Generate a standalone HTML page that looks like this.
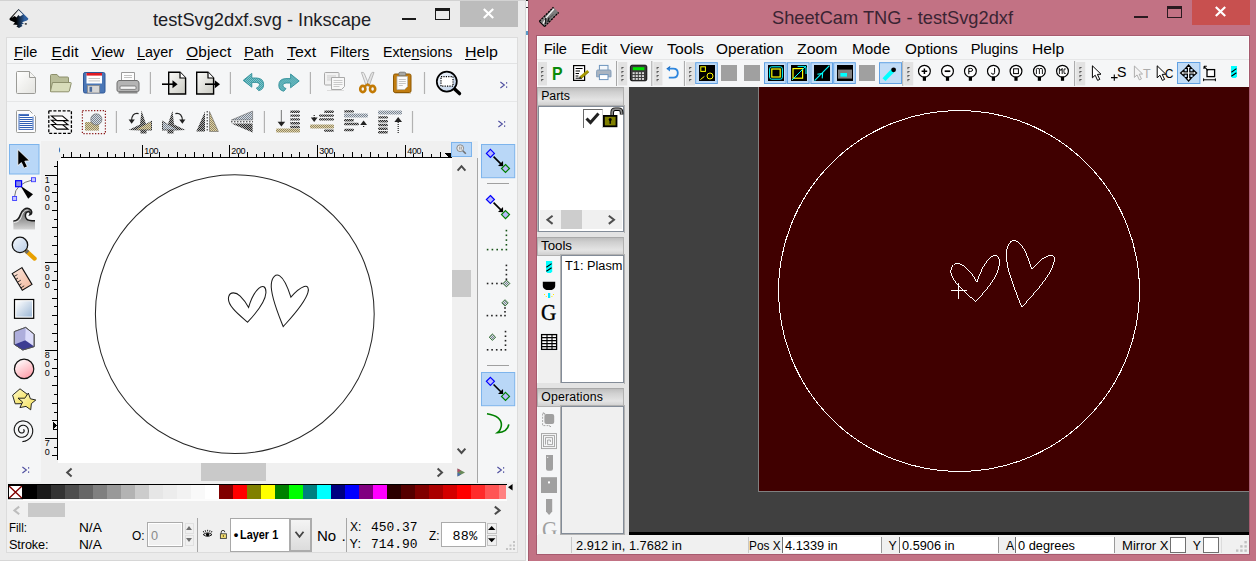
<!DOCTYPE html><html><head><meta charset="utf-8"><title>testSvg2dxf</title><style>
*{box-sizing:border-box}
html,body{margin:0;padding:0}
body{width:1256px;height:561px;position:relative;overflow:hidden;background:#ebebeb;font-family:"Liberation Sans",sans-serif;color:#000}
.a{position:absolute}
.t{position:absolute;white-space:nowrap;line-height:1}
svg{position:absolute;overflow:visible}
u{text-decoration:underline;text-underline-offset:1.5px;text-decoration-thickness:1px}
</style></head><body>
<div class="a" style="left:0px;top:0px;width:528px;height:561px;background:#ebebeb;"></div>
<div class="a" style="left:0px;top:0px;width:526px;height:1px;background:#d2d2d2;"></div>
<div class="a" style="left:0px;top:560px;width:526px;height:1px;background:#d6d6d6;"></div>
<div class="a" style="left:525px;top:0px;width:1px;height:561px;background:#d6d6d6;"></div>
<div class="a" style="left:526px;top:0px;width:2px;height:561px;background:#f8f9f9;"></div>
<div class="a" style="left:526px;top:0px;width:2px;height:1px;background:#222;"></div>
<div class="a" style="left:526px;top:7px;width:2px;height:1px;background:#222;"></div>
<div class="a" style="left:526px;top:31px;width:2px;height:4px;background:#5a9ac8;"></div>
<div class="t" style="left:152.5px;top:10.00px;font-size:19px;color:#1c1c24;transform:scaleX(0.9606);transform-origin:0 0;">testSvg2dxf.svg - Inkscape</div>
<div class="a" style="left:402px;top:17.5px;width:14px;height:2.5px;background:#1a1a1a;"></div>
<div class="a" style="left:435px;top:8px;width:15px;height:12px;background:transparent;border:1px solid #1a1a1a;border-top:3px solid #1a1a1a"></div>
<div class="a" style="left:460px;top:1px;width:58px;height:25.6px;background:#bcbcbc;"></div>
<svg style="left:483px;top:9px" width="11" height="9" viewBox="0 0 11 9" ><path d="M0.8 0 L10.2 9 M10.2 0 L0.8 9" stroke="#fff" stroke-width="2.2" fill="none"/></svg>
<div class="a" style="left:6px;top:37px;width:512px;height:516px;background:#dcdcdc;"></div>
<div class="a" style="left:7px;top:38px;width:510px;height:514px;background:#f0f0f0;"></div>
<div class="a" style="left:7px;top:38px;width:510px;height:103px;background:#f5f6f7;"></div>
<div class="a" style="left:7px;top:63px;width:510px;height:1px;background:#e2e3e4;"></div>
<div class="a" style="left:7px;top:101px;width:510px;height:1px;background:#e6e7e8;"></div>
<div class="t" style="left:14.45px;top:44.00px;font-size:15.4px;color:#000;transform:scaleX(0.9450);transform-origin:0 0;"><u>F</u>ile</div>
<div class="t" style="left:51.45px;top:44.00px;font-size:15.4px;color:#000;letter-spacing:0.221px;"><u>E</u>dit</div>
<div class="t" style="left:91.45px;top:44.00px;font-size:15.4px;color:#000;letter-spacing:-0.051px;"><u>V</u>iew</div>
<div class="t" style="left:137.45px;top:44.00px;font-size:15.4px;color:#000;transform:scaleX(0.9333);transform-origin:0 0;"><u>L</u>ayer</div>
<div class="t" style="left:186.2px;top:44.00px;font-size:15.4px;color:#000;letter-spacing:0.139px;"><u>O</u>bject</div>
<div class="t" style="left:244.45px;top:44.00px;font-size:15.4px;color:#000;transform:scaleX(0.9454);transform-origin:0 0;"><u>P</u>ath</div>
<div class="t" style="left:287.2px;top:44.00px;font-size:15.4px;color:#000;transform:scaleX(1.0339);transform-origin:0 0;"><u>T</u>ext</div>
<div class="t" style="left:330.2px;top:44.00px;font-size:15.4px;color:#000;transform:scaleX(0.9351);transform-origin:0 0;">Filter<u>s</u></div>
<div class="t" style="left:382.95px;top:44.00px;font-size:15.4px;color:#000;transform:scaleX(0.9220);transform-origin:0 0;">Exte<u>n</u>sions</div>
<div class="t" style="left:465.45px;top:44.00px;font-size:15.4px;color:#000;transform:scaleX(1.0404);transform-origin:0 0;"><u>H</u>elp</div>
<div class="a" style="left:7px;top:141px;width:34px;height:341.4px;background:#f5f6f7;"></div>
<div class="a" style="left:478px;top:141px;width:39px;height:341.4px;background:#f5f6f7;"></div>
<div class="a" style="left:477px;top:142px;width:1px;height:341px;background:#a6a6a6;"></div>
<div class="t" style="left:9.0px;top:522.00px;font-size:12.7px;color:#000;transform:scaleX(0.9063);transform-origin:0 0;">Fill:</div>
<div class="t" style="left:9.0px;top:539.00px;font-size:12.7px;color:#000;letter-spacing:-0.105px;">Stroke:</div>
<div class="t" style="left:79.2px;top:522.00px;font-size:12.7px;color:#000;transform:scaleX(1.0770);transform-origin:0 0;">N/A</div>
<div class="t" style="left:79.2px;top:539.00px;font-size:12.7px;color:#000;transform:scaleX(1.0770);transform-origin:0 0;">N/A</div>
<div class="t" style="left:132.3px;top:530.00px;font-size:12.7px;color:#000;transform:scaleX(0.9399);transform-origin:0 0;">O:</div>
<div class="a" style="left:147px;top:522px;width:36.3px;height:24.6px;background:#f0f0f0;border:1px solid #ababab;box-shadow:inset 0 0 0 1px #fff"></div>
<div class="t" style="left:151px;top:530.00px;font-size:12.7px;color:#8a8a8a;">0</div>
<div class="a" style="left:184.5px;top:523px;width:9px;height:11px;background:#f0f0f0;border:1px solid #e0e0e0"></div>
<div class="a" style="left:184.5px;top:535px;width:9px;height:11px;background:#f0f0f0;border:1px solid #e0e0e0"></div>
<svg style="left:186px;top:526px" width="6" height="16" viewBox="0 0 6 16" ><path d="M0 4 L3 0 L6 4Z M0 12 L3 16 L6 12Z" fill="#6e6e6e"/></svg>
<div class="a" style="left:197.3px;top:518px;width:1px;height:34px;background:#a6a6a6;"></div>
<div class="a" style="left:230px;top:518px;width:82px;height:34px;background:#fff;border:1px solid #a8a8a8"></div>
<div class="a" style="left:289px;top:518px;width:23px;height:34px;background:linear-gradient(#f4f4f4,#dcdcdc);border:2px solid #acacac"></div>
<svg style="left:295px;top:531px" width="9" height="7" viewBox="0 0 9 7" ><path d="M0.5 0.8 L4.5 5.8 L8.5 0.8" stroke="#444" stroke-width="1.8" fill="none"/></svg>
<div class="t" style="left:233.8px;top:528.00px;font-size:13px;color:#000;font-weight:bold;">•</div>
<div class="t" style="left:240.2px;top:528.00px;font-size:13px;color:#000;transform:scaleX(0.8390);transform-origin:0 0;font-weight:bold;">Layer 1</div>
<div class="t" style="left:317px;top:528.00px;font-size:15.5px;color:#000;transform:scaleX(0.9690);transform-origin:0 0;">No</div>
<div class="t" style="left:341.5px;top:528.00px;font-size:15.5px;color:#000;">.</div>
<div class="a" style="left:345px;top:518px;width:1.5px;height:34px;background:#f0f0f0;"></div>
<div class="a" style="left:346.3px;top:518px;width:1px;height:34px;background:#a6a6a6;"></div>
<div class="t" style="left:349.6px;top:521.00px;font-size:12.7px;color:#000;transform:scaleX(0.9501);transform-origin:0 0;">X:</div>
<div class="t" style="left:349.6px;top:538.00px;font-size:12.7px;color:#000;letter-spacing:0.102px;">Y:</div>
<div class="t" style="left:371.4px;top:521.00px;font-size:13.4px;color:#000;transform:scaleX(0.9659);transform-origin:0 0;font-family:'Liberation Mono',monospace;">450.37</div>
<div class="t" style="left:371.4px;top:538.00px;font-size:13.4px;color:#000;transform:scaleX(0.9659);transform-origin:0 0;font-family:'Liberation Mono',monospace;">714.90</div>
<div class="t" style="left:428.8px;top:530.00px;font-size:12.7px;color:#000;transform:scaleX(0.9215);transform-origin:0 0;">Z:</div>
<div class="a" style="left:441.3px;top:522.3px;width:45.2px;height:24.4px;background:#fff;border:1px solid #ababab"></div>
<div class="t" style="left:452.6px;top:530.00px;font-size:13.4px;color:#000;letter-spacing:0.239px;font-family:'Liberation Mono',monospace;">88%</div>
<div class="a" style="left:487.3px;top:523.3px;width:9.6px;height:11px;background:#f0f0f0;border:1px solid #c4c4c4"></div>
<div class="a" style="left:487.3px;top:534.6px;width:9.6px;height:11px;background:#f0f0f0;border:1px solid #c4c4c4"></div>
<svg style="left:488.3px;top:526px" width="7.4" height="16.3" viewBox="0 0 7.4 16.3" ><path d="M0 4 L3.7 0 L7.4 4Z M0 12.3 L3.7 16.3 L7.4 12.3Z" fill="#000"/></svg>
<svg style="left:506px;top:541px" width="9" height="9" viewBox="0 0 9 9" ><g fill="#c4c4c4"><rect x="7" y="0" width="2" height="2"/><rect x="7" y="3.5" width="2" height="2"/><rect x="3.5" y="3.5" width="2" height="2"/><rect x="7" y="7" width="2" height="2"/><rect x="3.5" y="7" width="2" height="2"/><rect x="0" y="7" width="2" height="2"/></g></svg>
<div class="a" style="left:58px;top:158px;width:394px;height:305px;background:#fff;"></div>
<svg style="left:57px;top:157px" width="6" height="6" viewBox="0 0 6 6" ><path d="M1 1 H4.2 L1 4.2Z" fill="#f0f0f0"/></svg>
<div class="a" style="left:41px;top:141px;width:437px;height:17px;background:#f0f0f0;"></div>
<div class="a" style="left:41px;top:141px;width:17px;height:340px;background:#f0f0f0;"></div>
<svg style="left:0px;top:0px" width="528" height="561" viewBox="0 0 528 561" shape-rendering="crispEdges"><rect x="61" y="157" width="390" height="1" fill="#000"/><rect x="63" y="154" width="1" height="3" fill="#000"/><rect x="71" y="152" width="1" height="5" fill="#000"/><rect x="80" y="154" width="1" height="3" fill="#000"/><rect x="89" y="152" width="1" height="5" fill="#000"/><rect x="98" y="154" width="1" height="3" fill="#000"/><rect x="107" y="152" width="1" height="5" fill="#000"/><rect x="115" y="154" width="1" height="3" fill="#000"/><rect x="124" y="152" width="1" height="5" fill="#000"/><rect x="133" y="154" width="1" height="3" fill="#000"/><rect x="142" y="145" width="1" height="12" fill="#000"/><rect x="150" y="154" width="1" height="3" fill="#000"/><rect x="159" y="152" width="1" height="5" fill="#000"/><rect x="168" y="154" width="1" height="3" fill="#000"/><rect x="177" y="152" width="1" height="5" fill="#000"/><rect x="185" y="154" width="1" height="3" fill="#000"/><rect x="194" y="152" width="1" height="5" fill="#000"/><rect x="203" y="154" width="1" height="3" fill="#000"/><rect x="212" y="152" width="1" height="5" fill="#000"/><rect x="220" y="154" width="1" height="3" fill="#000"/><rect x="229" y="145" width="1" height="12" fill="#000"/><rect x="238" y="154" width="1" height="3" fill="#000"/><rect x="247" y="152" width="1" height="5" fill="#000"/><rect x="256" y="154" width="1" height="3" fill="#000"/><rect x="264" y="152" width="1" height="5" fill="#000"/><rect x="273" y="154" width="1" height="3" fill="#000"/><rect x="282" y="152" width="1" height="5" fill="#000"/><rect x="291" y="154" width="1" height="3" fill="#000"/><rect x="299" y="152" width="1" height="5" fill="#000"/><rect x="308" y="154" width="1" height="3" fill="#000"/><rect x="317" y="145" width="1" height="12" fill="#000"/><rect x="326" y="154" width="1" height="3" fill="#000"/><rect x="334" y="152" width="1" height="5" fill="#000"/><rect x="343" y="154" width="1" height="3" fill="#000"/><rect x="352" y="152" width="1" height="5" fill="#000"/><rect x="361" y="154" width="1" height="3" fill="#000"/><rect x="370" y="152" width="1" height="5" fill="#000"/><rect x="378" y="154" width="1" height="3" fill="#000"/><rect x="387" y="152" width="1" height="5" fill="#000"/><rect x="396" y="154" width="1" height="3" fill="#000"/><rect x="405" y="145" width="1" height="12" fill="#000"/><rect x="413" y="154" width="1" height="3" fill="#000"/><rect x="422" y="152" width="1" height="5" fill="#000"/><rect x="431" y="154" width="1" height="3" fill="#000"/><rect x="440" y="152" width="1" height="5" fill="#000"/><rect x="57" y="161" width="1" height="299" fill="#000"/><rect x="54" y="166" width="3" height="1" fill="#000"/><rect x="45" y="175" width="12" height="1" fill="#000"/><rect x="54" y="184" width="3" height="1" fill="#000"/><rect x="52" y="192" width="5" height="1" fill="#000"/><rect x="54" y="201" width="3" height="1" fill="#000"/><rect x="52" y="210" width="5" height="1" fill="#000"/><rect x="54" y="219" width="3" height="1" fill="#000"/><rect x="52" y="227" width="5" height="1" fill="#000"/><rect x="54" y="236" width="3" height="1" fill="#000"/><rect x="52" y="245" width="5" height="1" fill="#000"/><rect x="54" y="254" width="3" height="1" fill="#000"/><rect x="45" y="262" width="12" height="1" fill="#000"/><rect x="54" y="271" width="3" height="1" fill="#000"/><rect x="52" y="280" width="5" height="1" fill="#000"/><rect x="54" y="289" width="3" height="1" fill="#000"/><rect x="52" y="298" width="5" height="1" fill="#000"/><rect x="54" y="306" width="3" height="1" fill="#000"/><rect x="52" y="315" width="5" height="1" fill="#000"/><rect x="54" y="324" width="3" height="1" fill="#000"/><rect x="52" y="333" width="5" height="1" fill="#000"/><rect x="54" y="341" width="3" height="1" fill="#000"/><rect x="45" y="350" width="12" height="1" fill="#000"/><rect x="54" y="359" width="3" height="1" fill="#000"/><rect x="52" y="368" width="5" height="1" fill="#000"/><rect x="54" y="376" width="3" height="1" fill="#000"/><rect x="52" y="385" width="5" height="1" fill="#000"/><rect x="54" y="394" width="3" height="1" fill="#000"/><rect x="52" y="403" width="5" height="1" fill="#000"/><rect x="54" y="412" width="3" height="1" fill="#000"/><rect x="52" y="420" width="5" height="1" fill="#000"/><rect x="54" y="429" width="3" height="1" fill="#000"/><rect x="45" y="438" width="12" height="1" fill="#000"/><rect x="54" y="447" width="3" height="1" fill="#000"/><rect x="52" y="455" width="5" height="1" fill="#000"/><path d="M445 153 L451.5 153 L451.5 157.5 L449 157.5 Z" fill="#000"/><path d="M53 421.5 L57 425.5 L53 429.5 Z" fill="#000"/><rect x="53" y="421.5" width="1.2" height="8" fill="#000"/></svg>
<div class="t" style="left:144.2px;top:147.00px;font-size:9px;color:#000;letter-spacing:-0.3px;">100</div>
<div class="t" style="left:231.2px;top:147.00px;font-size:9px;color:#000;letter-spacing:-0.3px;">200</div>
<div class="t" style="left:319.2px;top:147.00px;font-size:9px;color:#000;letter-spacing:-0.3px;">300</div>
<div class="t" style="left:407.2px;top:147.00px;font-size:9px;color:#000;letter-spacing:-0.3px;">400</div>
<div class="a" style="left:58.5px;top:141px;width:3px;height:16px;overflow:hidden"><div class="t" style="left:-3.4px;top:5.1px;font-size:9px;color:#000">0</div></div>
<div class="t" style="left:44.7px;top:176.00px;font-size:9px;color:#000;">1</div>
<div class="t" style="left:44.7px;top:185.00px;font-size:9px;color:#000;">0</div>
<div class="t" style="left:44.7px;top:194.00px;font-size:9px;color:#000;">0</div>
<div class="t" style="left:44.7px;top:203.00px;font-size:9px;color:#000;">0</div>
<div class="t" style="left:44.7px;top:264.00px;font-size:9px;color:#000;">9</div>
<div class="t" style="left:44.7px;top:273.00px;font-size:9px;color:#000;">0</div>
<div class="t" style="left:44.7px;top:281.00px;font-size:9px;color:#000;">0</div>
<div class="t" style="left:44.7px;top:351.00px;font-size:9px;color:#000;">8</div>
<div class="t" style="left:44.7px;top:360.00px;font-size:9px;color:#000;">0</div>
<div class="t" style="left:44.7px;top:369.00px;font-size:9px;color:#000;">0</div>
<div class="t" style="left:44.7px;top:439.00px;font-size:9px;color:#000;">7</div>
<div class="t" style="left:44.7px;top:448.00px;font-size:9px;color:#000;">0</div>
<div class="a" style="left:41px;top:460px;width:17px;height:3px;background:#f0f0f0;"></div>
<div class="a" style="left:452px;top:158px;width:19.5px;height:305px;background:#f0f0f0;"></div>
<div class="a" style="left:452px;top:270px;width:19px;height:27px;background:#c9c9c9;"></div>
<div class="a" style="left:58px;top:463px;width:394px;height:18.5px;background:#f0f0f0;"></div>
<div class="a" style="left:201px;top:463.2px;width:64.8px;height:18.3px;background:#c9c9c9;"></div>
<div class="a" style="left:452px;top:463px;width:25px;height:18.5px;background:#f0f0f0;"></div>
<div class="a" style="left:451px;top:142px;width:21px;height:15px;background:#b9d7f7;border:1px solid #7db4ec"></div>
<svg style="left:456px;top:144px" width="11" height="11" viewBox="0 0 11 11" ><circle cx="4.2" cy="4.2" r="3.4" fill="#e8e8e8" stroke="#8a8a8a" stroke-width="1"/><path d="M6.8 6.8 L9.8 9.8" stroke="#707070" stroke-width="1.6"/><rect x="3.2" y="2.6" width="1" height="3" fill="#999"/><rect x="4.8" y="2.6" width="1" height="3" fill="#999"/></svg>
<svg style="left:457px;top:164.5px" width="9" height="6.2" viewBox="0 0 9 6.2" ><path d="M0.6 5.6 L4.5 1.2 L8.4 5.6" stroke="#4b4b4b" stroke-width="2" fill="none"/></svg>
<svg style="left:457px;top:448.4px" width="9" height="6.2" viewBox="0 0 9 6.2" ><path d="M0.6 0.6 L4.5 5 L8.4 0.6" stroke="#4b4b4b" stroke-width="2" fill="none"/></svg>
<svg style="left:65.5px;top:467.5px" width="6.2" height="9" viewBox="0 0 6.2 9" ><path d="M5.6 0.6 L1.2 4.5 L5.6 8.4" stroke="#4b4b4b" stroke-width="2" fill="none"/></svg>
<svg style="left:437px;top:467.5px" width="6.2" height="9" viewBox="0 0 6.2 9" ><path d="M0.6 0.6 L5 4.5 L0.6 8.4" stroke="#4b4b4b" stroke-width="2" fill="none"/></svg>
<svg style="left:0px;top:0px" width="528" height="561" viewBox="0 0 528 561" ><circle cx="234.8" cy="314.1" r="139.4" fill="none" stroke="#262626" stroke-width="1.02"/><g transform="translate(234.7 314.1)" fill="none" stroke="#1c1c1c" stroke-width="1.05"><path d="M12.9 8.1 C6.5 2.5 -8.5 -8.5 -6.0 -17.5 C-4.6 -22.6 1.2 -22.2 5.5 -18.0 C8.9 -14.7 11.6 -10.9 13.9 -6.7 C15.6 -12.6 19.3 -21.4 24.0 -25.7 C27.8 -29.2 31.6 -28.0 31.2 -21.1 C30.6 -11.5 20.5 0.0 12.9 8.1 Z"/><path d="M48.5 12.5 C44.0 1.0 35.5 -18.5 36.6 -30.0 C37.3 -37.3 41.2 -40.6 45.0 -38.2 C50.5 -34.7 53.8 -24.5 56.2 -16.9 C59.8 -21.0 65.0 -26.0 69.5 -27.5 C73.0 -28.6 74.5 -26.0 73.2 -21.5 C70.0 -10.5 57.0 3.0 48.5 12.5 Z"/></g></svg>
<div class="a" style="left:8px;top:484px;width:499px;height:1px;background:#000;"></div>
<div class="a" style="left:8px;top:499px;width:499px;height:2.4px;background:#fcfcfc;"></div>
<div class="a" style="left:23px;top:485px;width:14px;height:14.2px;background:#000000;"></div>
<div class="a" style="left:37px;top:485px;width:14px;height:14.2px;background:#1a1a1a;"></div>
<div class="a" style="left:51px;top:485px;width:14px;height:14.2px;background:#333333;"></div>
<div class="a" style="left:65px;top:485px;width:14px;height:14.2px;background:#4d4d4d;"></div>
<div class="a" style="left:79px;top:485px;width:14px;height:14.2px;background:#666666;"></div>
<div class="a" style="left:93px;top:485px;width:14px;height:14.2px;background:#808080;"></div>
<div class="a" style="left:107px;top:485px;width:14px;height:14.2px;background:#999999;"></div>
<div class="a" style="left:121px;top:485px;width:14px;height:14.2px;background:#b3b3b3;"></div>
<div class="a" style="left:135px;top:485px;width:14px;height:14.2px;background:#cccccc;"></div>
<div class="a" style="left:149px;top:485px;width:14px;height:14.2px;background:#e6e6e6;"></div>
<div class="a" style="left:163px;top:485px;width:14px;height:14.2px;background:#ececec;"></div>
<div class="a" style="left:177px;top:485px;width:14px;height:14.2px;background:#f2f2f2;"></div>
<div class="a" style="left:191px;top:485px;width:14px;height:14.2px;background:#f9f9f9;"></div>
<div class="a" style="left:205px;top:485px;width:14px;height:14.2px;background:#ffffff;"></div>
<div class="a" style="left:219px;top:485px;width:14px;height:14.2px;background:#800000;"></div>
<div class="a" style="left:233px;top:485px;width:14px;height:14.2px;background:#ff0000;"></div>
<div class="a" style="left:247px;top:485px;width:14px;height:14.2px;background:#808000;"></div>
<div class="a" style="left:261px;top:485px;width:14px;height:14.2px;background:#ffff00;"></div>
<div class="a" style="left:275px;top:485px;width:14px;height:14.2px;background:#008000;"></div>
<div class="a" style="left:289px;top:485px;width:14px;height:14.2px;background:#00ff00;"></div>
<div class="a" style="left:303px;top:485px;width:14px;height:14.2px;background:#008080;"></div>
<div class="a" style="left:317px;top:485px;width:14px;height:14.2px;background:#00ffff;"></div>
<div class="a" style="left:331px;top:485px;width:14px;height:14.2px;background:#000080;"></div>
<div class="a" style="left:345px;top:485px;width:14px;height:14.2px;background:#0000ff;"></div>
<div class="a" style="left:359px;top:485px;width:14px;height:14.2px;background:#800080;"></div>
<div class="a" style="left:373px;top:485px;width:14px;height:14.2px;background:#ff00ff;"></div>
<div class="a" style="left:387px;top:485px;width:14px;height:14.2px;background:#2b0000;"></div>
<div class="a" style="left:401px;top:485px;width:14px;height:14.2px;background:#550000;"></div>
<div class="a" style="left:415px;top:485px;width:14px;height:14.2px;background:#800000;"></div>
<div class="a" style="left:429px;top:485px;width:14px;height:14.2px;background:#aa0000;"></div>
<div class="a" style="left:443px;top:485px;width:14px;height:14.2px;background:#d40000;"></div>
<div class="a" style="left:457px;top:485px;width:14px;height:14.2px;background:#ff0000;"></div>
<div class="a" style="left:471px;top:485px;width:14px;height:14.2px;background:#ff2a2a;"></div>
<div class="a" style="left:485px;top:485px;width:14px;height:14.2px;background:#ff5555;"></div>
<div class="a" style="left:499px;top:485px;width:7.300000000000011px;height:14.2px;background:#ff8080;"></div>
<div class="a" style="left:8px;top:485px;width:15px;height:14.2px;background:#fff;"></div>
<svg style="left:8px;top:485px" width="15" height="14.2" viewBox="0 0 15 14.2" ><path d="M0.5 0.5 L14.5 13.7 M14.5 0.5 L0.5 13.7" stroke="#800000" stroke-width="1.4"/><rect x="0.5" y="0.5" width="14" height="13.2" fill="none" stroke="#000" stroke-width="1"/></svg>
<svg style="left:508.4px;top:484.4px" width="4.6" height="6.4" viewBox="0 0 4.6 6.4" ><path d="M4.6 0 L0 3.2 L4.6 6.4Z" fill="#000"/></svg>
<div class="a" style="left:28.1px;top:503.1px;width:36.7px;height:13.8px;background:#c9c9c9;"></div>
<svg style="left:13px;top:506px" width="7" height="8.8" viewBox="0 0 7 8.8" ><path d="M6.2 0.6 L1.4 4.4 L6.2 8.2" stroke="#bdbdbd" stroke-width="2" fill="none"/></svg>
<svg style="left:494px;top:506px" width="7" height="8.8" viewBox="0 0 7 8.8" ><path d="M0.8 0.6 L5.6 4.4 L0.8 8.2" stroke="#4b4b4b" stroke-width="2" fill="none"/></svg>
<svg style="left:0px;top:0px" width="528" height="561" viewBox="0 0 528 561" ><defs>
<pattern id="st" width="2" height="2" patternUnits="userSpaceOnUse"><rect width="2" height="2" fill="#a9a9a9"/><rect width="1" height="1" fill="#2a2a2a"/><rect x="1" y="1" width="1" height="1" fill="#2a2a2a"/></pattern>
<pattern id="stt" width="2" height="2" patternUnits="userSpaceOnUse"><rect width="2" height="2" fill="#e4d6a4"/><rect width="1" height="1" fill="#8e8468"/><rect x="1" y="1" width="1" height="1" fill="#8e8468"/></pattern>
<pattern id="stb" width="2" height="2" patternUnits="userSpaceOnUse"><rect width="2" height="2" fill="#d4dce6"/><rect width="1" height="1" fill="#7c848c"/><rect x="1" y="1" width="1" height="1" fill="#7c848c"/></pattern>
<pattern id="teal" width="2" height="2" patternUnits="userSpaceOnUse"><rect width="2" height="2" fill="#8fd3d8"/><rect width="1" height="1" fill="#2f8f99"/><rect x="1" y="1" width="1" height="1" fill="#2f8f99"/></pattern>
<linearGradient id="pg" x1="0" y1="0" x2="1" y2="1"><stop offset="0" stop-color="#ffffff"/><stop offset="1" stop-color="#e3e3df"/></linearGradient>
<linearGradient id="dg" x1="0" y1="0" x2="1" y2="1"><stop offset="0" stop-color="#fbfbf9"/><stop offset="1" stop-color="#c9c9c1"/></linearGradient>
<linearGradient id="rg" x1="0" y1="0" x2="1" y2="1"><stop offset="0" stop-color="#ffffff"/><stop offset="1" stop-color="#9db8d6"/></linearGradient>
<linearGradient id="cg" x1="0.2" y1="0" x2="0.8" y2="1"><stop offset="0" stop-color="#ffffff"/><stop offset="1" stop-color="#ff9aa6"/></linearGradient>
<linearGradient id="wg" x1="0" y1="0" x2="0" y2="1"><stop offset="0" stop-color="#5c5c5c"/><stop offset="0.55" stop-color="#9a9a9a"/><stop offset="1" stop-color="#d4d4d4"/></linearGradient>
<linearGradient id="yg" x1="0" y1="0" x2="1" y2="1"><stop offset="0" stop-color="#fffbd0"/><stop offset="1" stop-color="#f2dc4c"/></linearGradient>
<linearGradient id="mg" x1="0" y1="0" x2="1" y2="1"><stop offset="0" stop-color="#fbe6dc"/><stop offset="1" stop-color="#f2b89c"/></linearGradient>
<linearGradient id="lg" x1="0" y1="0" x2="1" y2="1"><stop offset="0" stop-color="#f4f8fd"/><stop offset="1" stop-color="#b9cde6"/></linearGradient>
<linearGradient id="ig" x1="0" y1="0" x2="1" y2="0"><stop offset="0.35" stop-color="#000"/><stop offset="0.8" stop-color="#2d5f9f"/></linearGradient>
</defs><path d="M18.6 9 L28.3 18.6 Q28.6 19.6 27 20.4 L22 22.2 L24 23.4 L21.5 24.6 L22.5 26 L19 28 L16.5 26.4 L17.6 25 L13 24.4 L15 22.6 L10.5 20.6 Q9 19.6 9.6 18.4 Z" fill="url(#ig)"/><path d="M18.6 10 L23 14.5 L20 16.5 L18.4 15 L16.5 17.4 L14.6 16 L11.5 18 Z" fill="#fff" opacity="0.92"/><rect x="24.8" y="23.2" width="2" height="1.4" fill="#222"/><path d="M17.5 71.5 H29.5 L35.5 77.5 V92.5 Q35.5 93.5 34.5 93.5 H17.5 Q16.5 93.5 16.5 92.5 V72.5 Q16.5 71.5 17.5 71.5Z" fill="url(#pg)" stroke="#9b9b97" stroke-width="1"/><path d="M29.5 71.5 V77.5 H35.5" fill="#f4f4f2" stroke="#9b9b97" stroke-width="1"/><path d="M50.5 91.5 V75.5 Q50.5 74.5 51.5 74.5 H57 L59 77 H67.5 Q68.5 77 68.5 78 V82" fill="#b9bd99" stroke="#8d906c" stroke-width="1"/><path d="M52.5 82.5 H70.5 Q71.4 82.5 71.2 83.4 L69.3 91 Q69.1 91.8 68.2 91.8 H51 Q50.2 91.8 50.5 91 Z" fill="#d8dcba" stroke="#8d906c" stroke-width="1"/><rect x="83.5" y="72.5" width="21.5" height="20.5" rx="1.6" fill="#4a76b6" stroke="#2f5796" stroke-width="1"/><rect x="86.5" y="73" width="15.5" height="10.5" fill="#fff"/><rect x="86.5" y="73" width="15.5" height="2.6" fill="#e01b24"/><rect x="88.5" y="78" width="11.5" height="1" fill="#c4c4c4"/><rect x="88.5" y="80.4" width="11.5" height="1" fill="#c4c4c4"/><rect x="87.5" y="85.5" width="12" height="7.5" fill="#d6d6d6" stroke="#8a8a8a" stroke-width="0.8"/><rect x="89.5" y="86.8" width="2.6" height="5" fill="#4a6a9c"/><path d="M121.5 80 V72.5 H134.5 V80" fill="#fdfdfd" stroke="#9a9a9a" stroke-width="1"/><rect x="124" y="75" width="8" height="0.9" fill="#bbb"/><rect x="124" y="77" width="8" height="0.9" fill="#bbb"/><path d="M119 80.5 H137 Q139 81 139 83 V90 Q139 91.5 137.5 91.5 H118.5 Q117 91.5 117 90 V83 Q117 81 119 80.5Z" fill="#b4b4b4" stroke="#6e6e6e" stroke-width="1"/><rect x="120" y="86" width="16" height="3.4" rx="1" fill="#f4f4f4" stroke="#6e6e6e" stroke-width="0.8"/><rect x="118.5" y="91.5" width="19" height="2" fill="#8a8a8a"/><rect x="149.8" y="72" width="1.2" height="22" fill="#b2b2b2"/><rect x="229.8" y="72" width="1.2" height="22" fill="#b2b2b2"/><rect x="309.79999999999995" y="72" width="1.2" height="22" fill="#b2b2b2"/><rect x="423.9" y="72" width="1.2" height="22" fill="#b2b2b2"/><path d="M168.7 72.3 H180 L185.6 78 V94 H168.7 Z" fill="url(#dg)" stroke="#000" stroke-width="1.4"/><path d="M180 72.3 V78 H185.6" fill="#fff" stroke="#000" stroke-width="1.2"/><path d="M162 84.2 H174" stroke="#000" stroke-width="1.6"/><path d="M172.5 80.2 L177.6 84.2 L172.5 88.2Z" fill="#000"/><path d="M196.7 72.3 H208 L213.6 78 V94 H196.7 Z" fill="url(#dg)" stroke="#000" stroke-width="1.4"/><path d="M208 72.3 V78 H213.6" fill="#fff" stroke="#000" stroke-width="1.2"/><path d="M205 84.2 H216" stroke="#000" stroke-width="1.6"/><path d="M214.8 80.2 L220 84.2 L214.8 88.2Z" fill="#000"/><path transform="translate(243.2 73)" d="M0 7.4 L8.6 0.4 V5 H13.4 Q20.4 5.4 20.4 11.6 Q20.4 16.8 15.4 17.6 L13.2 15 Q16.6 14 16.4 11.4 Q16 9.4 13 9.4 H8.6 V14.2 Z" fill="url(#teal)" stroke="#2f8f99" stroke-width="0.9"/><path transform="translate(299.2 73.6) scale(-1 1)" d="M0 7.4 L8.6 0.4 V5 H13.4 Q20.4 5.4 20.4 11.6 Q20.4 16.8 15.4 17.6 L13.2 15 Q16.6 14 16.4 11.4 Q16 9.4 13 9.4 H8.6 V14.2 Z" fill="url(#teal)" stroke="#2f8f99" stroke-width="0.9"/><rect x="324.5" y="72.5" width="14.5" height="12.5" rx="1" fill="#f2f2f2" stroke="#a9a9a9"/><rect x="327" y="75.5" width="9" height="0.9" fill="#c8c8c8"/><rect x="327" y="77.5" width="9" height="0.9" fill="#c8c8c8"/><rect x="327" y="79.5" width="4" height="0.9" fill="#c8c8c8"/><path d="M331.5 77.5 H344.5 V86.5 L341.5 89.5 H331.5Z" fill="#f8f8f8" stroke="#a9a9a9"/><rect x="333.5" y="80" width="9" height="0.9" fill="#c4c4c4"/><rect x="333.5" y="82" width="9" height="0.9" fill="#c4c4c4"/><rect x="333.5" y="84" width="9" height="0.9" fill="#c4c4c4"/><rect x="333.5" y="86" width="6" height="0.9" fill="#c4c4c4"/><rect x="327" y="90" width="17" height="1" fill="#dcdcdc"/><path d="M361.4 72.4 Q363.6 72 364.2 73.4 L369 85 L366.4 86.4 Z" fill="#ececec" stroke="#a8a8a8" stroke-width="0.8"/><path d="M374 72.4 Q371.8 72 371.2 73.4 L366.4 85 L369 86.4 Z" fill="#e2e2e2" stroke="#a8a8a8" stroke-width="0.8"/><circle cx="367.7" cy="84" r="0.9" fill="#999"/><ellipse cx="362.8" cy="89" rx="2.6" ry="3.1" fill="none" stroke="#c27a05" stroke-width="2.6"/><ellipse cx="372.6" cy="89" rx="2.6" ry="3.1" fill="none" stroke="#c27a05" stroke-width="2.6"/><path d="M364.8 86.2 L367.7 84.4 L370.6 86.2" stroke="#c27a05" stroke-width="2" fill="none"/><rect x="393.5" y="74" width="17.5" height="18.5" rx="1.6" fill="#c17d11" stroke="#8f5902" stroke-width="1"/><rect x="398.8" y="72.2" width="7" height="3.6" rx="1.4" fill="#a8a8a4" stroke="#6c6c68" stroke-width="0.8"/><path d="M397 76.5 H407.5 V86.5 L404.5 89.5 H397Z" fill="#fcfcfc" stroke="#b8b8b4" stroke-width="0.8"/><rect x="398.8" y="79" width="7" height="0.9" fill="#c0c0c0"/><rect x="398.8" y="81" width="7" height="0.9" fill="#c0c0c0"/><rect x="398.8" y="83" width="7" height="0.9" fill="#c0c0c0"/><rect x="398.8" y="85" width="4" height="0.9" fill="#c0c0c0"/><rect x="395" y="93" width="16" height="1" fill="#d8d0c0"/><path d="M453.5 88 L459.5 93.6" stroke="#000" stroke-width="3.4" stroke-linecap="round"/><circle cx="446.8" cy="81.6" r="10" fill="url(#lg)" stroke="#000" stroke-width="1.7"/><rect x="441" y="76.6" width="12" height="9.6" fill="#fff" stroke="#000" stroke-width="1.2" stroke-dasharray="1.2 1.2"/><path d="M500.4 82 L504.4 85 L500.4 88" stroke="#4d4d9e" stroke-width="1.1" fill="none"/><rect x="506.0" y="82.2" width="1.2" height="1.4" fill="#4d4d9e"/><rect x="506.0" y="86.4" width="1.2" height="1.4" fill="#4d4d9e"/><path d="M498.4 121 L502.4 124 L498.4 127" stroke="#4d4d9e" stroke-width="1.1" fill="none"/><rect x="504.0" y="121.2" width="1.2" height="1.4" fill="#4d4d9e"/><rect x="504.0" y="125.4" width="1.2" height="1.4" fill="#4d4d9e"/><path d="M22.4 467 L26.4 470 L22.4 473" stroke="#4d4d9e" stroke-width="1.1" fill="none"/><rect x="28.0" y="467.2" width="1.2" height="1.4" fill="#4d4d9e"/><rect x="28.0" y="471.4" width="1.2" height="1.4" fill="#4d4d9e"/><path d="M497.4 467 L501.4 470 L497.4 473" stroke="#4d4d9e" stroke-width="1.1" fill="none"/><rect x="503.0" y="467.2" width="1.2" height="1.4" fill="#4d4d9e"/><rect x="503.0" y="471.4" width="1.2" height="1.4" fill="#4d4d9e"/><path d="M17.5 110.5 H29.5 L35.5 116.5 V131.5 Q35.5 132.5 34.5 132.5 H17.5 Q16.5 132.5 16.5 131.5 V111.5 Q16.5 110.5 17.5 110.5Z" fill="#fdfdfd" stroke="#9b9b97" stroke-width="1"/><rect x="19.5" y="115" width="13" height="1" fill="#2f5fb5"/><rect x="19.5" y="117" width="13" height="1" fill="#2f5fb5"/><rect x="19.5" y="119" width="13" height="1" fill="#2f5fb5"/><rect x="19.5" y="121" width="13" height="1" fill="#2f5fb5"/><rect x="19.5" y="123" width="13" height="1" fill="#2f5fb5"/><rect x="19.5" y="125" width="13" height="1" fill="#2f5fb5"/><rect x="19.5" y="127" width="13" height="1" fill="#2f5fb5"/><rect x="19.5" y="114.6" width="9.5" height="2.4" fill="none"/><rect x="19" y="114.4" width="14" height="15" fill="none" stroke="#2f5fb5" stroke-width="0.9"/><rect x="29" y="113.5" width="5" height="3" fill="#fdfdfd"/><rect x="48.8" y="110.8" width="22.6" height="22.6" fill="none" stroke="#000" stroke-width="1.3" stroke-dasharray="3 1.6"/><path d="M51.5 124.5 H62.5 L68 129.1 H57Z" fill="#fff" stroke="#000" stroke-width="1.1"/><path d="M51.5 120.2 H62.5 L68 124.8 H57Z" fill="#fff" stroke="#000" stroke-width="1.1"/><path d="M51.5 116 H62.5 L68 120.6 H57Z" fill="#fff" stroke="#000" stroke-width="1.1"/><rect x="82.4" y="110.6" width="23" height="23" fill="none" stroke="#8b1a1a" stroke-width="1.2" stroke-dasharray="1.3 1.6"/><rect x="85" y="122" width="14" height="8.6" fill="url(#stt)"/><circle cx="96.3" cy="119.4" r="5.6" fill="url(#stb)" stroke="#666" stroke-width="0.6"/><rect x="115.80000000000001" y="111" width="1.2" height="22" fill="#b2b2b2"/><rect x="263.79999999999995" y="111" width="1.2" height="22" fill="#b2b2b2"/><rect x="411.9" y="111" width="1.2" height="22" fill="#b2b2b2"/><path d="M141.5 110.5 L146 124 L152 120.5 V130.5 L146.5 130.5 V133.5 H140.5 V130.5 L128.5 130 L140 124.6Z" fill="url(#st)"/><path d="M136 129.5 L151 122 V129.5Z" fill="url(#stt)"/><path d="M138.6 113.6 Q131.5 112.4 131.6 121" stroke="#222" stroke-width="1.3" fill="none"/><path d="M128.6 119.6 L131.6 123.8 L134.8 119.6Z" fill="#222"/><path d="M172.5 110.5 L168 124 L162 120.5 V130.5 L167.5 130.5 V133.5 H173.5 V130.5 L185.5 130 L174 124.6Z" fill="url(#st)"/><path d="M163 129.5 V122 L177 129.5Z" fill="url(#stb)"/><path d="M175.4 113.6 Q182.5 112.4 182.4 121" stroke="#222" stroke-width="1.3" fill="none"/><path d="M185.4 119.6 L182.4 123.8 L179.2 119.6Z" fill="#222"/><path d="M205 111.5 V131.5 H196.2Z" fill="url(#st)"/><path d="M209.5 111.5 V131.5 H218.4Z" fill="url(#stt)" stroke="#555" stroke-width="0.5"/><path d="M207.2 111 V132" stroke="#222" stroke-width="1" stroke-dasharray="1.5 1.5"/><path d="M252.6 111 V120 H231.4Z" fill="url(#stb)" stroke="#555" stroke-width="0.5"/><path d="M252.6 132.5 V123.6 H231.4Z" fill="url(#st)"/><path d="M231 121.8 H253" stroke="#222" stroke-width="1" stroke-dasharray="1.5 1.5"/><rect x="290" y="110.6" width="10" height="2.4" rx="1.2" fill="url(#st)"/><rect x="290" y="114.4" width="10" height="2.4" rx="1.2" fill="url(#st)"/><rect x="290" y="118.2" width="10" height="2.4" rx="1.2" fill="url(#st)"/><rect x="290" y="122" width="10" height="2.4" rx="1.2" fill="url(#st)"/><rect x="290" y="125.8" width="10" height="2.4" rx="1.2" fill="url(#st)"/><rect x="276" y="128.6" width="24" height="4" rx="1" fill="url(#stt)"/><path d="M281.4 110.5 V124" stroke="#222" stroke-width="1.2" stroke-dasharray="1 1"/><path d="M277.6 121.8 L281.4 126.6 L285.2 121.8Z" fill="#222"/><rect x="324" y="110.6" width="10" height="2.4" rx="1.2" fill="url(#st)"/><rect x="319" y="114.4" width="15" height="2.4" rx="1.2" fill="url(#st)"/><rect x="319" y="118.2" width="15" height="2.4" rx="1.2" fill="url(#st)"/><rect x="324" y="129.4" width="10" height="2.4" rx="1.2" fill="url(#st)"/><rect x="310" y="124.6" width="24" height="4" rx="1" fill="url(#stt)"/><path d="M314.2 115 V119" stroke="#222" stroke-width="1.2" stroke-dasharray="1 1"/><path d="M310.8 117.6 L314.2 122 L317.6 117.6Z" fill="#222"/><rect x="344" y="110.2" width="10" height="2.4" rx="1.2" fill="url(#st)"/><rect x="344" y="119" width="10" height="2.4" rx="1.2" fill="url(#st)"/><rect x="344" y="122.8" width="15" height="2.4" rx="1.2" fill="url(#st)"/><rect x="344" y="128.8" width="10" height="2.4" rx="1.2" fill="url(#st)"/><rect x="344" y="113.6" width="24" height="4" rx="1" fill="url(#stb)"/><path d="M363.6 124 V128" stroke="#222" stroke-width="1.2" stroke-dasharray="1 1"/><path d="M360.2 125 L363.6 120.6 L367 125Z" fill="#222"/><rect x="378" y="116.2" width="10" height="2.4" rx="1.2" fill="url(#st)"/><rect x="378" y="120" width="10" height="2.4" rx="1.2" fill="url(#st)"/><rect x="378" y="123.8" width="10" height="2.4" rx="1.2" fill="url(#st)"/><rect x="378" y="127.6" width="10" height="2.4" rx="1.2" fill="url(#st)"/><rect x="378" y="131" width="10" height="2.4" rx="1.2" fill="url(#st)"/><rect x="378" y="110.4" width="24" height="4" rx="1" fill="url(#stb)"/><path d="M398.2 120 V133" stroke="#222" stroke-width="1.2" stroke-dasharray="1 1"/><path d="M394.4 122 L398.2 117 L402 122Z" fill="#222"/><rect x="9.5" y="144.5" width="29.5" height="29.5" fill="#b9d7f7" stroke="#7db4ec"/><path d="M17.8 149.4 L17.8 165.6 L21.4 162.6 L24 168.2 L27.4 166.6 L24.8 161.2 L29.6 160.8 Z" fill="#000" stroke="#fff" stroke-width="0.8" stroke-linejoin="round"/><path d="M14.6 196.5 Q14.6 184 33.5 179.6" stroke="#666" stroke-width="0.9" fill="none"/><path d="M20.4 185.8 L33 194.2 L28.2 198.8Z" fill="#000"/><rect x="15.6" y="180.7" width="6" height="6" fill="#8a8ae6" stroke="#0000ff" stroke-width="1.2"/><rect x="31.5" y="177.7" width="4" height="4" fill="#c8c8ff" stroke="#3c3cff" stroke-width="0.9"/><rect x="12.6" y="196.5" width="4" height="4" fill="#c8c8ff" stroke="#3c3cff" stroke-width="0.9"/><path d="M13.4 221 C18 221 19.4 217.6 20.6 214.2 C22.2 209.8 25.6 207.4 29 208.6 C32.4 209.8 32.6 214 29.8 214.8 C30.8 212.8 29.6 211.4 27.8 211.8 C25 212.4 24.6 216.8 26.6 219 C28.2 220.8 31 220.8 35 220.8 V229.4 H13.4Z" fill="url(#wg)"/><path d="M13.4 221 C18 221 19.4 217.6 20.6 214.2 C22.2 209.8 25.6 207.4 29 208.6 C32.4 209.8 32.6 214 29.8 214.8 C30.8 212.8 29.6 211.4 27.8 211.8 C25 212.4 24.6 216.8 26.6 219 C28.2 220.8 31 220.8 35 220.8" fill="none" stroke="#1a1a1a" stroke-width="1.5"/><path d="M14 222.4 C18.8 222.4 20.6 219 21.8 215.4 C23 211.8 25.6 209.6 28.4 210.2" fill="none" stroke="#f4f4f4" stroke-width="0.9"/><path d="M26.6 251.4 L34.6 258.6" stroke="#e8a000" stroke-width="4.2" stroke-linecap="round"/><path d="M26 250.8 L28 252.6" stroke="#6a6a6a" stroke-width="4"/><circle cx="20" cy="244.9" r="7.7" fill="url(#lg)" stroke="#111" stroke-width="1.3"/><path d="M21.9 267.6 L12.2 273.6 L22.3 290.2 L32 284.4Z" fill="url(#mg)" stroke="#111" stroke-width="1.1"/><path d="M14 276.5 L17.4 274.6 M15.8 279.4 L18 278 M17.4 282.2 L20.8 280.2 M19.2 285 L21.4 283.8 M21 287.8 L24.2 285.8" stroke="#222" stroke-width="0.9"/><rect x="14.5" y="299.5" width="19.2" height="18.8" fill="#fff" stroke="#000" stroke-width="1.2"/><rect x="16.2" y="301.2" width="15.8" height="15.4" fill="url(#rg)"/><path d="M25.7 327.4 L14.3 331.6 L14.3 344.4 L22.8 350 L34.2 346.6 L34.2 334.2Z" fill="#dcdcfa" stroke="#555" stroke-width="1"/><path d="M25.7 327.4 L14.3 331.6 L14.3 344.4 L25.2 340.2Z" fill="#aeaedc"/><path d="M14.3 344.4 L25.2 340.2 L34.2 346.6 L22.8 350Z" fill="#3c3c92"/><path d="M25.7 327.4 L14.3 331.6 L14.3 344.4 L22.8 350 L34.2 346.6 L34.2 334.2Z" fill="none" stroke="#555" stroke-width="1"/><circle cx="24.1" cy="368.9" r="9.7" fill="url(#cg)" stroke="#111" stroke-width="1.2"/><path d="M20 388.8 L12.6 395.2 L15.2 403.8 L24.5 403.6 L27.4 394.4Z" fill="url(#yg)" stroke="#111" stroke-width="0.9"/><path d="M28.3 393 L30.4 398.8 L35.8 400 L31.4 403.6 L30.7 409.8 L26 406.4 L19.9 407.6 L22.6 402 L18 398.2 L24.8 398.2Z" fill="url(#yg)" stroke="#111" stroke-width="0.9"/><path d="M23.4 429.5 L23.4 429.5 L23.5 429.6 L23.6 429.6 L23.7 429.7 L23.7 429.8 L23.8 429.8 L23.9 429.9 L23.9 430.0 L24.0 430.1 L24.0 430.2 L24.1 430.3 L24.1 430.4 L24.1 430.5 L24.1 430.6 L24.2 430.7 L24.2 430.9 L24.2 431.0 L24.1 431.1 L24.1 431.2 L24.1 431.4 L24.0 431.5 L24.0 431.6 L23.9 431.7 L23.9 431.9 L23.8 432.0 L23.7 432.1 L23.6 432.2 L23.5 432.3 L23.4 432.4 L23.3 432.5 L23.1 432.6 L23.0 432.7 L22.8 432.8 L22.7 432.8 L22.5 432.9 L22.4 432.9 L22.2 433.0 L22.0 433.0 L21.8 433.0 L21.6 433.0 L21.5 433.0 L21.3 433.0 L21.1 432.9 L20.9 432.9 L20.7 432.8 L20.5 432.7 L20.4 432.7 L20.2 432.6 L20.0 432.5 L19.8 432.3 L19.7 432.2 L19.5 432.0 L19.4 431.9 L19.2 431.7 L19.1 431.5 L19.0 431.3 L18.9 431.1 L18.8 430.9 L18.7 430.7 L18.7 430.5 L18.6 430.3 L18.6 430.0 L18.5 429.8 L18.5 429.5 L18.5 429.3 L18.6 429.1 L18.6 428.8 L18.7 428.6 L18.7 428.3 L18.8 428.1 L18.9 427.8 L19.0 427.6 L19.2 427.4 L19.3 427.1 L19.5 426.9 L19.7 426.7 L19.9 426.5 L20.1 426.3 L20.3 426.2 L20.5 426.0 L20.8 425.9 L21.0 425.7 L21.3 425.6 L21.6 425.5 L21.9 425.4 L22.2 425.4 L22.5 425.3 L22.8 425.3 L23.1 425.3 L23.4 425.3 L23.7 425.3 L24.0 425.3 L24.3 425.4 L24.6 425.5 L24.9 425.6 L25.2 425.7 L25.5 425.9 L25.8 426.1 L26.1 426.2 L26.4 426.4 L26.6 426.7 L26.9 426.9 L27.1 427.2 L27.3 427.4 L27.5 427.7 L27.7 428.0 L27.8 428.3 L28.0 428.7 L28.1 429.0 L28.2 429.4 L28.3 429.7 L28.4 430.1 L28.4 430.4 L28.4 430.8 L28.4 431.2 L28.4 431.6 L28.3 431.9 L28.2 432.3 L28.1 432.7 L28.0 433.1 L27.9 433.4 L27.7 433.8 L27.5 434.1 L27.3 434.5 L27.0 434.8 L26.8 435.1 L26.5 435.4 L26.2 435.7 L25.9 435.9 L25.5 436.2 L25.2 436.4 L24.8 436.6 L24.4 436.7 L24.0 436.9 L23.6 437.0 L23.2 437.1 L22.8 437.2 L22.3 437.3 L21.9 437.3 L21.5 437.3 L21.0 437.3 L20.6 437.2 L20.1 437.1 L19.7 437.0 L19.3 436.9 L18.8 436.7 L18.4 436.5 L18.0 436.3 L17.6 436.0 L17.3 435.8 L16.9 435.5 L16.5 435.1 L16.2 434.8 L15.9 434.4 L15.6 434.0 L15.4 433.6 L15.1 433.2 L14.9 432.8 L14.7 432.3 L14.6 431.9 L14.4 431.4 L14.3 430.9 L14.3 430.4 L14.2 429.9 L14.2 429.4 L14.3 428.9 L14.3 428.4 L14.4 427.9 L14.5 427.4 L14.7 426.9 L14.8 426.4 L15.1 425.9 L15.3 425.4 L15.6 425.0 L15.9 424.5 L16.2 424.1 L16.6 423.7 L16.9 423.3 L17.3 423.0 L17.8 422.7 L18.2 422.3 L18.7 422.1 L19.2 421.8 L19.7 421.6 L20.2 421.4 L20.8 421.2 L21.3 421.1 L21.9 421.0 L22.4 421.0 L23.0 420.9 L23.6 421.0 L24.2 421.0 L24.7 421.1 L25.3 421.2 L25.9 421.4 L26.4 421.6 L27.0 421.8 L27.5 422.0 L28.0 422.3 L28.5 422.7 L29.0 423.0 L29.4 423.4 L29.9 423.8 L30.3 424.3 L30.7 424.7 L31.0 425.2 L31.4 425.8 L31.7 426.3 L31.9 426.9 L32.1 427.5 L32.3 428.0 L32.5 428.7 L32.6 429.3 L32.7 429.9 L32.7 430.5 L32.7 431.2 L32.7 431.8 L32.6 432.5 L32.5 433.1 L32.3 433.7 L32.1 434.3 L31.9 435.0 L31.6 435.6 L31.3 436.1 L31.0 436.7 L30.6 437.2 L30.2 437.8 L29.7 438.3 L29.2 438.7 L28.7 439.2 L28.2 439.6 L27.6 439.9 L27.0 440.3 L26.4 440.6 L25.8 440.9 L25.1 441.1 L24.5 441.3 L23.8 441.4 L23.1 441.5 L22.4 441.6" fill="none" stroke="#111" stroke-width="1.1"/><rect x="481.5" y="144.5" width="33.2" height="33.2" fill="#b9d7f7" stroke="#7db4ec"/><rect x="481.5" y="372.5" width="33.2" height="33.2" fill="#b9d7f7" stroke="#7db4ec"/><path d="M493.6 156.6 L501.6 164.6" stroke="#000" stroke-width="1.7"/><path d="M503 161.0 L503.2 166.20000000000002 L498 166.0Z" fill="#000"/><path d="M490.4 149.4 L494.4 153.4 L490.4 157.4 L486.4 153.4Z" fill="#b8b8fa" stroke="#0000ff" stroke-width="1.2"/><path d="M505.5 164.5 L509.5 168.5 L505.5 172.5 L501.5 168.5Z" fill="#b8b8fa" stroke="#008000" stroke-width="1.2"/><path d="M493.6 202.7 L501.6 210.7" stroke="#000" stroke-width="1.7"/><path d="M503 207.1 L503.2 212.3 L498 212.1Z" fill="#000"/><path d="M490.4 195.5 L494.4 199.5 L490.4 203.5 L486.4 199.5Z" fill="#b8b8fa" stroke="#0000ff" stroke-width="1.2"/><path d="M505.5 210.6 L509.5 214.6 L505.5 218.6 L501.5 214.6Z" fill="#b8b8fa" stroke="#008000" stroke-width="1.2"/><path d="M493.6 384.5 L501.6 392.5" stroke="#000" stroke-width="1.7"/><path d="M503 388.90000000000003 L503.2 394.1 L498 393.90000000000003Z" fill="#000"/><path d="M490.4 377.3 L494.4 381.3 L490.4 385.3 L486.4 381.3Z" fill="#b8b8fa" stroke="#0000ff" stroke-width="1.2"/><path d="M505.5 392.40000000000003 L509.5 396.40000000000003 L505.5 400.40000000000003 L501.5 396.40000000000003Z" fill="#b8b8fa" stroke="#008000" stroke-width="1.2"/><rect x="487" y="183" width="22" height="1" fill="#a0a0a0"/><rect x="487" y="365" width="22" height="1" fill="#a0a0a0"/><rect x="505.6" y="229.8" width="1.6" height="1.6" fill="#145214"/><rect x="505.6" y="234.5" width="1.6" height="1.6" fill="#145214"/><rect x="505.6" y="239.3" width="1.6" height="1.6" fill="#145214"/><rect x="505.6" y="244.0" width="1.6" height="1.6" fill="#145214"/><rect x="505.6" y="248.8" width="1.6" height="1.6" fill="#145214"/><rect x="486.8" y="248.8" width="1.6" height="1.6" fill="#145214"/><rect x="491.6" y="248.8" width="1.6" height="1.6" fill="#145214"/><rect x="496.4" y="248.8" width="1.6" height="1.6" fill="#145214"/><rect x="501.2" y="248.8" width="1.6" height="1.6" fill="#145214"/><rect x="505.6" y="264.6" width="1.6" height="1.6" fill="#222"/><rect x="505.6" y="269.2" width="1.6" height="1.6" fill="#222"/><rect x="505.6" y="273.8" width="1.6" height="1.6" fill="#222"/><rect x="505.6" y="278.4" width="1.6" height="1.6" fill="#222"/><rect x="486.8" y="282.7" width="1.6" height="1.6" fill="#222"/><rect x="491.5" y="282.7" width="1.6" height="1.6" fill="#222"/><rect x="496.1" y="282.7" width="1.6" height="1.6" fill="#222"/><rect x="500.8" y="282.7" width="1.6" height="1.6" fill="#222"/><path d="M506.4 280.1 L509.79999999999995 283.5 L506.4 286.9 L503.0 283.5Z" fill="url(#stb)" stroke="#2a6a2a" stroke-width="0.9"/><rect x="504.2" y="307.2" width="1.6" height="1.6" fill="#222"/><rect x="504.2" y="311.0" width="1.6" height="1.6" fill="#222"/><rect x="504.2" y="314.8" width="1.6" height="1.6" fill="#222"/><rect x="486.6" y="314.8" width="1.6" height="1.6" fill="#222"/><rect x="491.1" y="314.8" width="1.6" height="1.6" fill="#222"/><rect x="495.7" y="314.8" width="1.6" height="1.6" fill="#222"/><rect x="500.2" y="314.8" width="1.6" height="1.6" fill="#222"/><path d="M505 299.7 L508.2 302.9 L505 306.09999999999997 L501.8 302.9Z" fill="url(#stb)" stroke="#2a6a2a" stroke-width="0.9"/><rect x="504.7" y="330.8" width="1.6" height="1.6" fill="#222"/><rect x="504.7" y="335.4" width="1.6" height="1.6" fill="#222"/><rect x="504.7" y="339.9" width="1.6" height="1.6" fill="#222"/><rect x="504.7" y="344.4" width="1.6" height="1.6" fill="#222"/><rect x="504.7" y="349.0" width="1.6" height="1.6" fill="#222"/><rect x="486.8" y="349.0" width="1.6" height="1.6" fill="#222"/><rect x="491.3" y="349.0" width="1.6" height="1.6" fill="#222"/><rect x="495.9" y="349.0" width="1.6" height="1.6" fill="#222"/><rect x="500.4" y="349.0" width="1.6" height="1.6" fill="#222"/><path d="M492.4 334.0 L495.59999999999997 337.2 L492.4 340.4 L489.2 337.2Z" fill="url(#stb)" stroke="#2a6a2a" stroke-width="0.9"/><path d="M487 413.7 C495 415 501.6 418.6 501.4 425 C501.2 428.6 499.6 431 497.4 432.6 C503.6 432.4 508 429.6 508.8 424.4" fill="none" stroke="#008000" stroke-width="1.6"/><path d="M457.5 468.5 L465 472.4 L457.5 476.4Z" fill="#6a8a5a"/><path d="M457.5 468.5 L461 470.4 L457.5 472.4Z" fill="#b04a6a"/><path d="M457.5 472.4 L461 474.4 L457.5 476.4Z" fill="#4a6ab0"/><path d="M203.2 534.6 Q207.6 531.2 212 534.6 Q207.6 538 203.2 534.6Z" fill="#fff" stroke="#111" stroke-width="1"/><circle cx="207.6" cy="534.6" r="1.7" fill="#000"/><path d="M204 532.6 L203.2 531 M205.6 531.8 L205.2 530.2 M207.6 531.4 V529.8 M209.6 531.8 L210 530.2 M211.2 532.6 L212 531" stroke="#111" stroke-width="0.9"/><rect x="220.4" y="533.8" width="6" height="4.6" fill="#f3de76" stroke="#3c3c3c" stroke-width="0.9"/><path d="M221.2 533.8 V532.2 Q221.2 530.4 223 530.4 Q224.8 530.4 224.8 532.2" fill="none" stroke="#3c3c3c" stroke-width="1"/><rect x="222.8" y="535.2" width="1.2" height="1.6" fill="#6a5a10"/></svg>
<div class="a" style="left:528px;top:0px;width:728px;height:561px;background:#c27284;"></div>
<div class="a" style="left:528px;top:0px;width:1px;height:561px;background:#a45d6f;"></div>
<div class="t" style="left:772.2px;top:8.00px;font-size:19px;color:#3a2433;transform:scaleX(0.9603);transform-origin:0 0;">SheetCam TNG - testSvg2dxf</div>
<div class="a" style="left:1134px;top:15.7px;width:14px;height:2.3px;background:#2a1a20;"></div>
<div class="a" style="left:1167.2px;top:6px;width:15px;height:12px;background:transparent;border:1px solid #2a1a20;border-top:3px solid #2a1a20"></div>
<div class="a" style="left:1192px;top:0px;width:58px;height:24.6px;background:#c8504f;"></div>
<svg style="left:1215px;top:7px" width="11" height="9" viewBox="0 0 11 9" ><path d="M0.8 0 L10.2 9 M10.2 0 L0.8 9" stroke="#fff" stroke-width="2.2" fill="none"/></svg>
<div class="a" style="left:536px;top:35px;width:714px;height:520px;background:#a65a6e;"></div>
<div class="a" style="left:537px;top:36px;width:712px;height:518px;background:#fbfcfc;"></div>
<div class="a" style="left:538px;top:37px;width:710px;height:516px;background:#f0f0f0;"></div>
<div class="a" style="left:538px;top:37px;width:710px;height:49.5px;background:#f5f6f7;"></div>
<div class="a" style="left:537px;top:59px;width:712px;height:1px;background:#e6e7e8;"></div>
<div class="t" style="left:543.7px;top:42.00px;font-size:14.6px;color:#000;letter-spacing:-0.109px;">File</div>
<div class="t" style="left:581.2px;top:42.00px;font-size:14.6px;color:#000;transform:scaleX(1.0414);transform-origin:0 0;">Edit</div>
<div class="t" style="left:620.3000000000001px;top:42.00px;font-size:14.6px;color:#000;transform:scaleX(1.0452);transform-origin:0 0;">View</div>
<div class="t" style="left:666.7px;top:42.00px;font-size:14.6px;color:#000;transform:scaleX(1.0797);transform-origin:0 0;">Tools</div>
<div class="t" style="left:716.45px;top:42.00px;font-size:14.6px;color:#000;transform:scaleX(1.0519);transform-origin:0 0;">Operation</div>
<div class="t" style="left:797.3000000000001px;top:42.00px;font-size:14.6px;color:#000;transform:scaleX(1.0798);transform-origin:0 0;">Zoom</div>
<div class="t" style="left:852.2px;top:42.00px;font-size:14.6px;color:#000;transform:scaleX(1.0459);transform-origin:0 0;">Mode</div>
<div class="t" style="left:904.6px;top:42.00px;font-size:14.6px;color:#000;transform:scaleX(1.0474);transform-origin:0 0;">Options</div>
<div class="t" style="left:970.7px;top:42.00px;font-size:14.6px;color:#000;letter-spacing:-0.073px;">Plugins</div>
<div class="t" style="left:1031.95px;top:42.00px;font-size:14.6px;color:#000;transform:scaleX(1.0723);transform-origin:0 0;">Help</div>
<div class="a" style="left:629px;top:86.5px;width:620px;height:448.5px;background:#404040;"></div>
<div class="a" style="left:758px;top:86.5px;width:491px;height:405.5px;background:#808080;"></div>
<div class="a" style="left:759px;top:86.5px;width:490px;height:404.5px;background:#400000;"></div>
<div class="a" style="left:629px;top:532px;width:620px;height:3px;background:#000;"></div>
<div class="a" style="left:624.4px;top:86.5px;width:4.6px;height:448px;background:#e3e3e3;"></div>
<svg style="left:528px;top:0px" width="728" height="561" viewBox="0 0 728 561" ><g transform="translate(431 291)" fill="none" stroke="#fff" stroke-width="1" shape-rendering="crispEdges"><circle cx="0" cy="0" r="180.5"/><g transform="scale(1.2948)" stroke-width="0.7723"><path d="M12.9 8.1 C6.5 2.5 -8.5 -8.5 -6.0 -17.5 C-4.6 -22.6 1.2 -22.2 5.5 -18.0 C8.9 -14.7 11.6 -10.9 13.9 -6.7 C15.6 -12.6 19.3 -21.4 24.0 -25.7 C27.8 -29.2 31.6 -28.0 31.2 -21.1 C30.6 -11.5 20.5 0.0 12.9 8.1 Z"/><path d="M48.5 12.5 C44.0 1.0 35.5 -18.5 36.6 -30.0 C37.3 -37.3 41.2 -40.6 45.0 -38.2 C50.5 -34.7 53.8 -24.5 56.2 -16.9 C59.8 -21.0 65.0 -26.0 69.5 -27.5 C73.0 -28.6 74.5 -26.0 73.2 -21.5 C70.0 -10.5 57.0 3.0 48.5 12.5 Z"/></g><path d="M-8 -0.4 H8 M-0.2 -8 V8" /></g></svg>
<div class="a" style="left:537px;top:86.5px;width:87.4px;height:19px;background:linear-gradient(#bebebe 0%,#d0d0d0 25%,#e4e4e4 70%,#d0d0d0 100%);border:1px solid #b0b0b0;border-top-color:#a8a8a8"></div>
<div class="t" style="left:541.2px;top:90.00px;font-size:12.3px;color:#000;letter-spacing:-0.027px;">Parts</div>
<div class="a" style="left:538px;top:105.5px;width:85.6px;height:126px;background:#fff;border:1px solid #838c98;box-shadow:0 0 0 1px #b2b2b2"></div>
<div class="a" style="left:540px;top:210px;width:81.8px;height:18.8px;background:#f0f0f0;"></div>
<div class="a" style="left:561px;top:210px;width:20.8px;height:18.8px;background:#cdcdcd;"></div>
<svg style="left:546px;top:214.5px" width="7.4" height="9.6" viewBox="0 0 7.4 9.6" ><path d="M6.6 0.7 L1.4 4.8 L6.6 8.9" stroke="#4f4f4f" stroke-width="2" fill="none"/></svg>
<svg style="left:607.8px;top:214.5px" width="7.4" height="9.6" viewBox="0 0 7.4 9.6" ><path d="M0.8 0.7 L6 4.8 L0.8 8.9" stroke="#4f4f4f" stroke-width="2" fill="none"/></svg>
<div class="a" style="left:583px;top:109px;width:20px;height:19px;background:#fff;border-top:1px solid #6a6a6a;border-left:1px solid #6a6a6a;border-right:1px solid #d0d0d0"></div>
<svg style="left:585px;top:111px" width="16" height="14" viewBox="0 0 16 14" ><path d="M1.5 7.5 L5.5 11.5 L13.5 2.5" stroke="#222" stroke-width="3" fill="none" stroke-linejoin="miter"/></svg>
<svg style="left:603px;top:107px" width="20" height="21" viewBox="0 0 20 21" ><path d="M9.2 9 V5.4 Q9.2 2.2 12.4 2.2 H15.4 Q18.6 2.2 18.6 5.4 V7.4" stroke="#000" stroke-width="3.6" fill="none"/><path d="M9.2 9 V5.4 Q9.2 2.2 12.4 2.2 H15.4 Q18.6 2.2 18.6 5.4 V7.4" stroke="#8c8c8c" stroke-width="1.8" fill="none"/><rect x="0.9" y="8.9" width="12.6" height="10.4" fill="#808000" stroke="#000" stroke-width="1.8"/><circle cx="7.2" cy="12.6" r="1.5" fill="#000"/><rect x="6.5" y="13" width="1.4" height="3.8" fill="#000"/></svg>
<div class="a" style="left:537px;top:232px;width:87.4px;height:5px;background:#e3e3e3;"></div>
<div class="a" style="left:537px;top:237px;width:87.4px;height:18.5px;background:linear-gradient(#bebebe 0%,#d0d0d0 25%,#e4e4e4 70%,#d0d0d0 100%);border:1px solid #b0b0b0;border-top-color:#a8a8a8"></div>
<div class="t" style="left:541.2px;top:240.00px;font-size:12.3px;color:#000;transform:scaleX(1.0796);transform-origin:0 0;">Tools</div>
<div class="a" style="left:537px;top:255.5px;width:24.5px;height:95px;background:#f5f6f7;"></div>
<div class="a" style="left:561px;top:255px;width:62.6px;height:127.5px;background:#fff;border:1px solid #838c98;box-shadow:0 0 0 1px #b2b2b2"></div>
<div class="t" style="left:564.6px;top:260.00px;font-size:12.3px;color:#000;transform:scaleX(1.0368);transform-origin:0 0;">T1: Plasm</div>
<div class="a" style="left:537px;top:383px;width:87.4px;height:5px;background:#e3e3e3;"></div>
<div class="a" style="left:537px;top:388px;width:87.4px;height:18.5px;background:linear-gradient(#bebebe 0%,#d0d0d0 25%,#e4e4e4 70%,#d0d0d0 100%);border:1px solid #b0b0b0;border-top-color:#a8a8a8"></div>
<div class="t" style="left:541.2px;top:391.00px;font-size:12.3px;color:#000;letter-spacing:0.170px;">Operations</div>
<div class="a" style="left:537px;top:406.5px;width:24.5px;height:127px;background:#f5f6f7;"></div>
<div class="a" style="left:561px;top:406px;width:62.6px;height:127.7px;background:#f0f0f0;border:1px solid #838c98;box-shadow:0 0 0 1px #b2b2b2"></div>
<div class="a" style="left:537px;top:535px;width:712px;height:19px;background:#f0f0f0;"></div>
<div class="a" style="left:571.3px;top:537px;width:1px;height:15.6px;background:#c8c8c8;"></div>
<div class="t" style="left:576.2px;top:540.00px;font-size:12.3px;color:#000;transform:scaleX(1.0453);transform-origin:0 0;">2.912 in, 1.7682 in</div>
<div class="a" style="left:748.2px;top:537px;width:1px;height:15.6px;background:#c8c8c8;"></div>
<div class="t" style="left:749.4px;top:540.00px;font-size:12.3px;color:#000;transform:scaleX(0.9629);transform-origin:0 0;">Pos X</div>
<div class="a" style="left:782px;top:536.6px;width:99.5px;height:16.4px;background:#fff;border-left:1px solid #707070;border-right:1px solid #9a9a9a"></div>
<div class="t" style="left:784.6px;top:540.00px;font-size:12.3px;color:#000;transform:scaleX(1.0413);transform-origin:0 0;">4.1339 in</div>
<div class="t" style="left:888.6px;top:540.00px;font-size:12.3px;color:#000;">Y</div>
<div class="a" style="left:899px;top:536.6px;width:99.7px;height:16.4px;background:#fff;border-left:1px solid #707070;border-right:1px solid #9a9a9a"></div>
<div class="t" style="left:901.6px;top:540.00px;font-size:12.3px;color:#000;transform:scaleX(1.0373);transform-origin:0 0;">0.5906 in</div>
<div class="t" style="left:1006px;top:540.00px;font-size:12.3px;color:#000;">A</div>
<div class="a" style="left:1015.2px;top:536.6px;width:99.4px;height:16.4px;background:#fff;border-left:1px solid #707070;border-right:1px solid #9a9a9a"></div>
<div class="t" style="left:1017.8000000000001px;top:540.00px;font-size:12.3px;color:#000;transform:scaleX(1.0419);transform-origin:0 0;">0 degrees</div>
<div class="t" style="left:1122.2px;top:540.00px;font-size:12.3px;color:#000;transform:scaleX(1.0657);transform-origin:0 0;">Mirror X</div>
<div class="a" style="left:1170px;top:537px;width:16px;height:16px;background:#fff;border:1px solid #707070"></div>
<div class="t" style="left:1192.8px;top:540.00px;font-size:12.3px;color:#000;">Y</div>
<div class="a" style="left:1203px;top:537px;width:16px;height:16px;background:#fff;border:1px solid #707070"></div>
<div class="a" style="left:1220.6px;top:537px;width:1px;height:15.6px;background:#dcdcdc;"></div>
<svg style="left:1236px;top:541px" width="11" height="11" viewBox="0 0 11 11" ><g fill="#c0c0c0"><rect x="8.4" y="0" width="2.4" height="2.4"/><rect x="8.4" y="4.2" width="2.4" height="2.4"/><rect x="4.2" y="4.2" width="2.4" height="2.4"/><rect x="8.4" y="8.4" width="2.4" height="2.4"/><rect x="4.2" y="8.4" width="2.4" height="2.4"/><rect x="0" y="8.4" width="2.4" height="2.4"/></g></svg>
<svg style="left:0px;top:0px" width="1256" height="561" viewBox="0 0 1256 561" ><g transform="translate(549 16.9) rotate(-45)"><rect x="-10" y="-3.7" width="20" height="7.4" fill="#7e7e7e"/><path d="M-10 -3.7 H10 M-10 3.7 H10" stroke="#000" stroke-width="1.3" stroke-dasharray="2.2 0.9"/><path d="M-10 -3.7 V3.7" stroke="#000" stroke-width="1"/><path d="M-4.5 -1.3 L9 -2.1" stroke="#f4f4f4" stroke-width="1.3"/><path d="M-9 0.6 L-5 -0.4" stroke="#f0f0f0" stroke-width="1.5"/><path d="M-7.5 2.6 L-3 -1.6 M-4.5 2.8 L-0.5 0.6" stroke="#1a1a1a" stroke-width="1.4"/><path d="M0 1 L5 1.4" stroke="#5a5a5a" stroke-width="1"/></g><rect x="538" y="62" width="9" height="23.4" fill="#e2e2e2"/><rect x="541.2" y="67" width="2.2" height="1" fill="#5a5a5a"/><rect x="541.2" y="68" width="1" height="1.2" fill="#5a5a5a"/><rect x="541.2" y="71" width="2.2" height="1" fill="#5a5a5a"/><rect x="541.2" y="72" width="1" height="1.2" fill="#5a5a5a"/><rect x="541.2" y="75" width="2.2" height="1" fill="#5a5a5a"/><rect x="541.2" y="76" width="1" height="1.2" fill="#5a5a5a"/><rect x="541.2" y="79" width="2.2" height="1" fill="#5a5a5a"/><rect x="541.2" y="80" width="1" height="1.2" fill="#5a5a5a"/><rect x="616.0" y="61" width="1" height="25" fill="#a6a6a6"/><rect x="618.2" y="62" width="9" height="23.4" fill="#e2e2e2"/><rect x="621.4000000000001" y="67" width="2.2" height="1" fill="#5a5a5a"/><rect x="621.4000000000001" y="68" width="1" height="1.2" fill="#5a5a5a"/><rect x="621.4000000000001" y="71" width="2.2" height="1" fill="#5a5a5a"/><rect x="621.4000000000001" y="72" width="1" height="1.2" fill="#5a5a5a"/><rect x="621.4000000000001" y="75" width="2.2" height="1" fill="#5a5a5a"/><rect x="621.4000000000001" y="76" width="1" height="1.2" fill="#5a5a5a"/><rect x="621.4000000000001" y="79" width="2.2" height="1" fill="#5a5a5a"/><rect x="621.4000000000001" y="80" width="1" height="1.2" fill="#5a5a5a"/><rect x="651.3" y="61" width="1" height="25" fill="#a6a6a6"/><rect x="653.4" y="62" width="9" height="23.4" fill="#e2e2e2"/><rect x="656.6" y="67" width="2.2" height="1" fill="#5a5a5a"/><rect x="656.6" y="68" width="1" height="1.2" fill="#5a5a5a"/><rect x="656.6" y="71" width="2.2" height="1" fill="#5a5a5a"/><rect x="656.6" y="72" width="1" height="1.2" fill="#5a5a5a"/><rect x="656.6" y="75" width="2.2" height="1" fill="#5a5a5a"/><rect x="656.6" y="76" width="1" height="1.2" fill="#5a5a5a"/><rect x="656.6" y="79" width="2.2" height="1" fill="#5a5a5a"/><rect x="656.6" y="80" width="1" height="1.2" fill="#5a5a5a"/><rect x="683.9" y="61" width="1" height="25" fill="#a6a6a6"/><rect x="686" y="62" width="9" height="23.4" fill="#e2e2e2"/><rect x="689.2" y="67" width="2.2" height="1" fill="#5a5a5a"/><rect x="689.2" y="68" width="1" height="1.2" fill="#5a5a5a"/><rect x="689.2" y="71" width="2.2" height="1" fill="#5a5a5a"/><rect x="689.2" y="72" width="1" height="1.2" fill="#5a5a5a"/><rect x="689.2" y="75" width="2.2" height="1" fill="#5a5a5a"/><rect x="689.2" y="76" width="1" height="1.2" fill="#5a5a5a"/><rect x="689.2" y="79" width="2.2" height="1" fill="#5a5a5a"/><rect x="689.2" y="80" width="1" height="1.2" fill="#5a5a5a"/><rect x="902.25" y="61" width="1" height="25" fill="#a6a6a6"/><rect x="904.2" y="62" width="9" height="23.4" fill="#e2e2e2"/><rect x="907.4000000000001" y="67" width="2.2" height="1" fill="#5a5a5a"/><rect x="907.4000000000001" y="68" width="1" height="1.2" fill="#5a5a5a"/><rect x="907.4000000000001" y="71" width="2.2" height="1" fill="#5a5a5a"/><rect x="907.4000000000001" y="72" width="1" height="1.2" fill="#5a5a5a"/><rect x="907.4000000000001" y="75" width="2.2" height="1" fill="#5a5a5a"/><rect x="907.4000000000001" y="76" width="1" height="1.2" fill="#5a5a5a"/><rect x="907.4000000000001" y="79" width="2.2" height="1" fill="#5a5a5a"/><rect x="907.4000000000001" y="80" width="1" height="1.2" fill="#5a5a5a"/><rect x="1074.1" y="61" width="1" height="25" fill="#a6a6a6"/><rect x="1076.2" y="62" width="9" height="23.4" fill="#e2e2e2"/><rect x="1079.4" y="67" width="2.2" height="1" fill="#5a5a5a"/><rect x="1079.4" y="68" width="1" height="1.2" fill="#5a5a5a"/><rect x="1079.4" y="71" width="2.2" height="1" fill="#5a5a5a"/><rect x="1079.4" y="72" width="1" height="1.2" fill="#5a5a5a"/><rect x="1079.4" y="75" width="2.2" height="1" fill="#5a5a5a"/><rect x="1079.4" y="76" width="1" height="1.2" fill="#5a5a5a"/><rect x="1079.4" y="79" width="2.2" height="1" fill="#5a5a5a"/><rect x="1079.4" y="80" width="1" height="1.2" fill="#5a5a5a"/><rect x="573.6" y="65.6" width="11" height="14.8" fill="#fff" stroke="#000" stroke-width="1.2"/><path d="M575.6 68.5 H582.6 M575.6 71 H580 M575.6 73.5 H579 M575.6 76 H578.4 M575.6 78.2 H582" stroke="#000" stroke-width="1"/><path d="M588.2 71 L580.4 77.6" stroke="#a89a00" stroke-width="2.8"/><path d="M588.2 71 L580.4 77.6" stroke="#5a5200" stroke-width="0.5" transform="translate(0.9 1)"/><path d="M579 78.8 L581.6 78.2 L579.8 76.6Z" fill="#222"/><rect x="599.4" y="65.4" width="8.6" height="6" fill="#f4f8fc" stroke="#6d94bd" stroke-width="1"/><path d="M597.6 70 H610 Q611 70 611 71.4 V76.8 H596.6 V71.4 Q596.6 70 597.6 70Z" fill="#aab4c0" stroke="#7c98b8" stroke-width="0.9"/><rect x="599.4" y="74.6" width="8.6" height="5" fill="#fff" stroke="#6d94bd" stroke-width="1"/><rect x="630.4" y="65.2" width="16.4" height="15.6" rx="1.6" fill="#3a3a3a" stroke="#000" stroke-width="0.9"/><rect x="632.8" y="67.2" width="11.6" height="3" fill="#00e000"/><rect x="632.6" y="72.2" width="2.1" height="1.9" fill="#d8d8d8"/><rect x="635.7" y="72.2" width="2.1" height="1.9" fill="#d8d8d8"/><rect x="638.8" y="72.2" width="2.1" height="1.9" fill="#d8d8d8"/><rect x="641.9" y="72.2" width="2.1" height="1.9" fill="#d8d8d8"/><rect x="632.6" y="75.1" width="2.1" height="1.9" fill="#d8d8d8"/><rect x="635.7" y="75.1" width="2.1" height="1.9" fill="#d8d8d8"/><rect x="638.8" y="75.1" width="2.1" height="1.9" fill="#d8d8d8"/><rect x="641.9" y="75.1" width="2.1" height="1.9" fill="#d8d8d8"/><rect x="632.6" y="78.0" width="2.1" height="1.9" fill="#d8d8d8"/><rect x="635.7" y="78.0" width="2.1" height="1.9" fill="#d8d8d8"/><rect x="638.8" y="78.0" width="2.1" height="1.9" fill="#d8d8d8"/><rect x="641.9" y="78.0" width="2.1" height="1.9" fill="#d8d8d8"/><path d="M668.4 68.6 H673.2 Q677.8 68.6 677.8 73 Q677.8 77.6 673.2 77.6 H668.8" fill="none" stroke="#2e86de" stroke-width="1.8"/><path d="M666.2 68.8 L670 66 V71.6Z" fill="#2e86de"/><path d="M667 68.8 L670.4 66.6" stroke="#1a5aa8" stroke-width="0.6"/><rect x="695.7" y="62.7" width="21.6" height="20.8" fill="#c2dcf6" stroke="#62a2e4" stroke-width="1"/><rect x="699" y="65" width="16" height="16" fill="#000"/><rect x="700.8" y="66.8" width="4.6" height="4.6" fill="none" stroke="#ffff00" stroke-width="1"/><circle cx="710" cy="76" r="3" fill="none" stroke="#ffff00" stroke-width="1"/><path d="M700.4 79.6 L704.4 76.4" stroke="#ffff00" stroke-width="1"/><rect x="721" y="65" width="16" height="16" fill="#a0a0a0"/><rect x="744" y="65" width="16" height="16" fill="#a0a0a0"/><rect x="764.5" y="62.7" width="21.6" height="20.8" fill="#c2dcf6" stroke="#62a2e4" stroke-width="1"/><rect x="768" y="65" width="16" height="16" fill="#000"/><rect x="769.6" y="66.8" width="12.8" height="12.4" rx="2" fill="none" stroke="#00ffff" stroke-width="1"/><rect x="771.8" y="69" width="8.4" height="8" fill="none" stroke="#ffff00" stroke-width="1.2"/><rect x="787.5" y="62.7" width="21.6" height="20.8" fill="#c2dcf6" stroke="#62a2e4" stroke-width="1"/><rect x="791" y="65" width="16" height="16" fill="#000"/><rect x="793" y="68.6" width="9.6" height="9.6" fill="none" stroke="#ffff00" stroke-width="1.2"/><path d="M792 80 L806.4 65.6" stroke="#00ffff" stroke-width="1"/><path d="M797.6 66.4 H804.4 Q806 66.4 806 68 V74" stroke="#00ffff" stroke-width="1" fill="none"/><rect x="810.9" y="62.7" width="21.6" height="20.8" fill="#c2dcf6" stroke="#62a2e4" stroke-width="1"/><rect x="814" y="65" width="16" height="16" fill="#000"/><path d="M814.6 80.6 L829.4 65.6" stroke="#00ffff" stroke-width="1.1"/><path d="M817.4 74.2 L822.6 73.4 L822.2 78.4" stroke="#00ffff" stroke-width="1.1" fill="none"/><rect x="833.7" y="62.7" width="21.6" height="20.8" fill="#c2dcf6" stroke="#62a2e4" stroke-width="1"/><rect x="837" y="65" width="16" height="16" fill="#000"/><rect x="838" y="69.6" width="14" height="9" fill="#808080"/><rect x="840.4" y="73" width="6.6" height="3.6" fill="#00ffff"/><rect x="859" y="65" width="16" height="16" fill="#a0a0a0"/><rect x="879.5" y="62.7" width="22" height="20.8" fill="#c2dcf6" stroke="#62a2e4" stroke-width="1"/><path d="M884 79.6 L892.6 70.8" stroke="#00ffff" stroke-width="4.2"/><circle cx="893.6" cy="69.8" r="2.4" fill="#000"/><circle cx="924.4" cy="71.2" r="5.9" fill="#fff" stroke="#000" stroke-width="1.2"/><rect x="922.8" y="76.6" width="3.2" height="4.2" fill="#000"/><path d="M921.6 71.2 H927.2 M924.4 68.4 V74" stroke="#000" stroke-width="1.5"/><circle cx="947.5" cy="71.2" r="5.9" fill="#fff" stroke="#000" stroke-width="1.2"/><rect x="945.9" y="76.6" width="3.2" height="4.2" fill="#000"/><path d="M944.7 71.2 H950.3" stroke="#000" stroke-width="1.7"/><circle cx="970.4" cy="71.2" r="5.9" fill="#fff" stroke="#000" stroke-width="1.2"/><rect x="968.8" y="76.6" width="3.2" height="4.2" fill="#000"/><path d="M968.8 74.2 V68.4 H970.8 Q972.6 68.4 972.6 69.9 Q972.6 71.4 970.8 71.4 H968.8" stroke="#000" stroke-width="1" fill="none"/><circle cx="993.4" cy="71.2" r="5.9" fill="#fff" stroke="#000" stroke-width="1.2"/><rect x="991.8" y="76.6" width="3.2" height="4.2" fill="#000"/><path d="M994.6 68 V72.6 Q994.6 74.2 993 74.2 Q991.6 74.2 991.4 72.8" stroke="#000" stroke-width="1" fill="none"/><circle cx="1016" cy="71.2" r="5.9" fill="#fff" stroke="#000" stroke-width="1.2"/><rect x="1014.4" y="76.6" width="3.2" height="4.2" fill="#000"/><rect x="1013.6" y="68.8" width="4.8" height="4.8" fill="none" stroke="#000" stroke-width="1"/><circle cx="1039.4" cy="71.2" r="5.9" fill="#fff" stroke="#000" stroke-width="1.2"/><rect x="1037.8000000000002" y="76.6" width="3.2" height="4.2" fill="#000"/><path d="M1036.4 74 V69.4 Q1036.4 68.4 1037.6 68.4 Q1039.4 68.4 1039.4 69.6 V74 M1039.4 69.6 Q1039.4 68.4 1041 68.4 Q1042.4 68.4 1042.4 69.6 V74" stroke="#000" stroke-width="0.9" fill="none"/><circle cx="1062.5" cy="71.2" r="5.9" fill="#fff" stroke="#000" stroke-width="1.2"/><rect x="1060.9" y="76.6" width="3.2" height="4.2" fill="#000"/><path d="M1059.4 74 V68.4 L1060.9 70.6 L1062.2 68.4 V74 M1065.8 69.2 Q1065 68.2 1064.2 69 Q1063.6 71.2 1064.2 73.4 Q1065 74.2 1065.8 73.2" stroke="#000" stroke-width="0.9" fill="none"/><path transform="translate(1092.4 65.8)" d="M0 0 V12 L2.8 9.4 L5.2 14.6 L7.4 13.6 L5 8.6 L8.6 8.4Z" fill="#fff" stroke="#000" stroke-width="1"/><path d="M1111 77.6 H1117.6 M1114.3 74.4 V80.8" stroke="#000" stroke-width="1.1"/><path transform="translate(1134.4 66) scale(0.95)" d="M0 0 V12 L2.8 9.4 L5.2 14.6 L7.4 13.6 L5 8.6 L8.6 8.4Z" fill="#f4f4f4" stroke="#ababab" stroke-width="1"/><path transform="translate(1157.2 65.8)" d="M0 0 V12 L2.8 9.4 L5.2 14.6 L7.4 13.6 L5 8.6 L8.6 8.4Z" fill="#fff" stroke="#000" stroke-width="1"/><rect x="1177.5" y="62.5" width="22.4" height="21" fill="#c2dcf6" stroke="#62a2e4" stroke-width="1"/><path d="M1188.6 65 L1191.6 68.4 H1189.8 V71.8 H1193.2 V70 L1196.6 73 L1193.2 76 V74.2 H1189.8 V77.6 H1191.6 L1188.6 81 L1185.6 77.6 H1187.4 V74.2 H1184 V76 L1180.6 73 L1184 70 V71.8 H1187.4 V68.4 H1185.6Z" fill="#fff" stroke="#000" stroke-width="1.25" stroke-linejoin="miter"/><rect x="1207" y="69.6" width="7.6" height="7" fill="#fff" stroke="#000" stroke-width="1.3"/><path d="M1203.6 79.8 H1215.4 M1203.6 78.4 V81.2 M1215.4 78.4 V81.2" stroke="#000" stroke-width="1"/><path d="M1204 66.6 L1208 70.4 M1204 66.2 H1206.8 M1204 66.2 V69" stroke="#000" stroke-width="1.1"/><path d="M1231 66 H1237 V76.6 L1235.6 78 H1232.4 L1231 76.6Z" fill="#00ffff"/><path d="M1231.4 72.24 L1236.4 68.64 M1231.4 76.32 L1236.4 72.72" stroke="#000" stroke-width="1.1"/><path d="M546 261 H552.2 V271.6 L550.8000000000001 273 H547.4 L546 271.6Z" fill="#00ffff"/><path d="M546.4 267.24 L551.6 263.64 M546.4 271.32 L551.6 267.72" stroke="#000" stroke-width="1.1"/><path d="M542.8 281.8 H555.2 V286 Q555.2 288.4 551.6 290 H546.4 Q542.8 288.4 542.8 286Z" fill="#000"/><rect x="548" y="293" width="2.2" height="5" fill="#00e5ff"/><g fill="#ffee00"><rect x="544" y="294" width="1" height="1"/><rect x="545.8" y="296" width="1" height="1"/><rect x="553" y="294" width="1" height="1"/><rect x="551.4" y="296" width="1" height="1"/></g><rect x="541" y="334" width="16.2" height="16" fill="#fff"/><rect x="541.6" y="334.6" width="15" height="14.8" fill="none" stroke="#000" stroke-width="1.3"/><path d="M547 334.6 V349.4 M552 334.6 V349.4 M541.6 337.6 H556.6 M541.6 340.6 H556.6 M541.6 343.6 H556.6 M541.6 346.6 H556.6" stroke="#000" stroke-width="1.1"/><rect x="544.4" y="414" width="9.8" height="10" rx="2" fill="#a0a0a0"/><path d="M543 412.6 L545 414.2" stroke="#a0a0a0" stroke-width="1.2"/><path d="M542.6 413.6 V425.6 H548" stroke="#a0a0a0" stroke-width="0.9" fill="none" stroke-dasharray="2 1.2"/><path d="M548.6 425.4 L551 426.8" stroke="#a0a0a0" stroke-width="1"/><g fill="none" stroke="#a0a0a0" stroke-width="0.9"><rect x="541.5" y="433.6" width="15" height="15"/><rect x="543.5" y="435.6" width="11" height="11"/><path d="M545.5 444.6 V437.6 H552.5 V444.6 H547.6 V440 H550.4 V442"/></g><path d="M546 455 H553 V468.6 Q553 470.8 551 470.8 H548 Q546 470.8 546 468.6Z" fill="#a0a0a0"/><rect x="547.2" y="456.8" width="1" height="1.2" fill="#f4f4f4"/><rect x="541" y="477.2" width="16" height="15.8" fill="#a0a0a0"/><rect x="548" y="481.4" width="2" height="2" fill="#fff"/><path d="M546 499 H552.2 V511.6 L549.1 515 L546 511.6Z" fill="#a0a0a0"/></svg>
<div class="t" style="left:551.9px;top:66.00px;font-size:17.6px;color:#0a8a0a;font-weight:bold;transform:scaleX(0.9);transform-origin:0 0;">P</div>
<div class="t" style="left:1116.6px;top:64.00px;font-size:15.4px;color:#000;transform:scaleX(0.92);transform-origin:0 0;">S</div>
<div class="t" style="left:1143px;top:68.00px;font-size:12.6px;color:#ababab;">T</div>
<div class="t" style="left:1164.8px;top:68.00px;font-size:12.6px;color:#000;transform:scaleX(0.92);transform-origin:0 0;">C</div>
<div class="t" style="left:541.4px;top:301.00px;font-size:23.6px;color:#000;font-family:'Liberation Serif',serif;transform:scaleX(0.9);transform-origin:0 0;-webkit-text-stroke:0.4px #000;">G</div>
<div class="a" style="left:537px;top:517px;width:24px;height:16.6px;overflow:hidden">
<div class="t" style="left:4.6px;top:1.00px;font-size:23.6px;color:#a0a0a0;font-family:'Liberation Serif',serif;transform:scaleX(0.9);transform-origin:0 0;">G</div>
</div>
</body></html>
